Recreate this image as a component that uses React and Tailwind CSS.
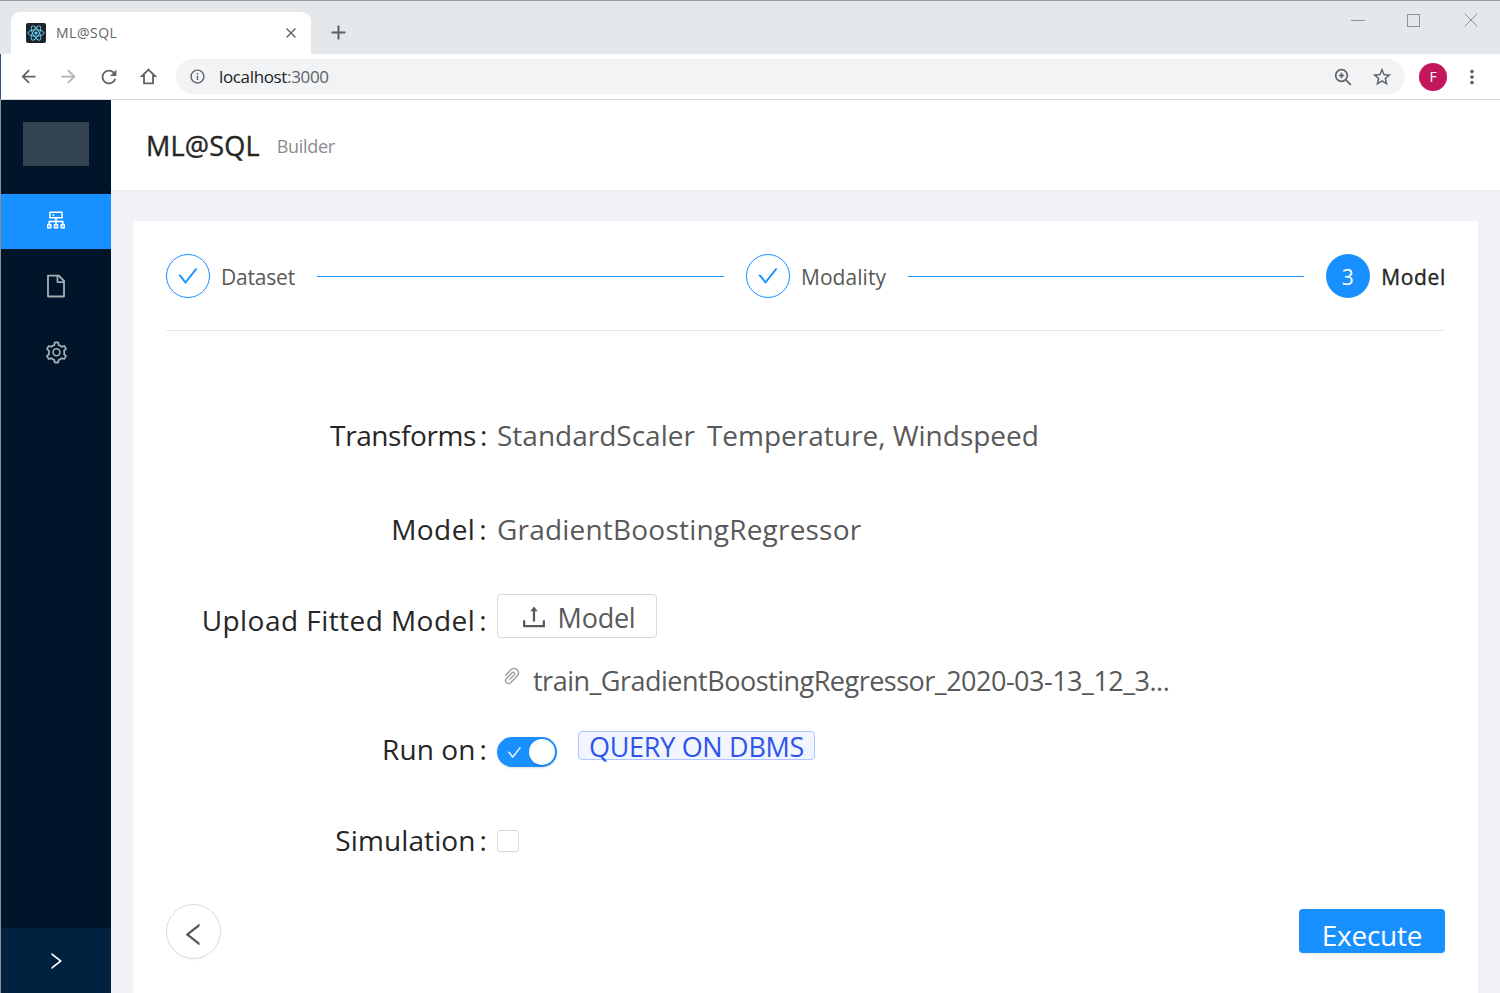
// App.jsx
import React from 'react';
import {
  AiOutlineCluster, AiOutlineFile, AiOutlineSetting, AiOutlineCheck, AiOutlineUpload,
  AiOutlinePaperClip, AiOutlineLeft, AiOutlineRight, AiOutlineClose, AiOutlinePlus,
} from 'react-icons/ai';
import { MdArrowBack, MdArrowForward, MdRefresh, MdInfoOutline, MdStarBorder, MdMoreVert } from 'react-icons/md';

function ReactLogo() {
  return (
    <svg width="20" height="20" viewBox="0 0 20 20" className="rounded-[2px] bg-[#20232a]">
      <circle cx="10" cy="10" r="1.6" fill="#61dafb" />
      <g fill="none" stroke="#61dafb" strokeWidth="0.9">
        <ellipse cx="10" cy="10" rx="8" ry="3.2" />
        <ellipse cx="10" cy="10" rx="8" ry="3.2" transform="rotate(60 10 10)" />
        <ellipse cx="10" cy="10" rx="8" ry="3.2" transform="rotate(120 10 10)" />
      </g>
    </svg>
  );
}

function HomeIcon() {
  return (
    <svg width="17" height="17" viewBox="0 0 17 17" fill="none" stroke="#5f6368" strokeWidth="1.8" strokeLinejoin="miter">
      <path d="M8.5 1.6 15 8h-2v7.4H4V8H2z" />
    </svg>
  );
}

function ZoomIcon() {
  return (
    <svg width="18" height="18" viewBox="0 0 18 18" fill="none" stroke="#5f6368" strokeWidth="1.7">
      <circle cx="7.5" cy="7.5" r="5.8" />
      <path d="M7.5 4.8v5.4M4.8 7.5h5.4M11.8 11.8l5 5" />
    </svg>
  );
}

function WindowClose() {
  return (
    <svg width="14" height="14" viewBox="0 0 14 14" stroke="#8f9193" strokeWidth="1" fill="none">
      <path d="M.5.5l13 13M13.5.5l-13 13" />
    </svg>
  );
}

function BrowserChrome() {
  return (
    <div className="shrink-0 border-t border-[#9a9c9e] font-['Open_Sans',sans-serif]">
      <div className="flex h-[53px] items-end bg-[#e5e8eb] pl-[11px]">
        <div className="flex h-[42px] w-[300px] items-center rounded-t-[9px] bg-white pl-[15px] pr-[13px]">
          <ReactLogo />
          <span className="ml-[10px] mb-[2px] text-[14px] tracking-[0.5px] text-[#5f6368]">ML@SQL</span>
          <AiOutlineClose className="ml-auto text-[#5f6368]" size={14} strokeWidth={30} />
        </div>
        <AiOutlinePlus className="mb-[12px] ml-[18px] text-[#5f6368]" size={19} strokeWidth={30} />
        <div className="mb-[27px] ml-auto flex items-center pr-[22px]">
          <div className="h-px w-[14px] bg-[#8f9193]" />
          <div className="ml-[42px] h-[13px] w-[13px] border border-[#8f9193]" />
          <div className="ml-[44px]"><WindowClose /></div>
        </div>
      </div>
      <div className="flex h-[46px] items-center border-b border-l border-b-[#d9dadc] border-l-[#2f4f86] bg-white pl-[17px] pr-[17px]">
        <MdArrowBack size={21} className="text-[#5f6368]" />
        <MdArrowForward size={21} className="ml-[19px] text-[#b1b3b6]" />
        <MdRefresh size={22} className="ml-[19px] text-[#5f6368]" />
        <div className="ml-[20px]"><HomeIcon /></div>
        <div className="ml-[19px] flex h-[35px] flex-1 items-center rounded-full bg-[#f1f3f4] pl-[13px] pr-[12px]">
          <MdInfoOutline size={17} className="text-[#5f6368]" />
          <span className="ml-[13px] text-[17px] tracking-[-0.35px] text-[#202124]">localhost<span className="text-[#5f6368]">:3000</span></span>
          <div className="ml-auto"><ZoomIcon /></div>
          <MdStarBorder size={22} className="ml-[19px] text-[#5f6368]" />
        </div>
        <div className="ml-[14px] flex h-[28px] w-[28px] items-center justify-center rounded-full bg-[#c2185b] text-[14px] text-white">F</div>
        <MdMoreVert size={22} className="ml-[14px] text-[#5f6368]" />
      </div>
    </div>
  );
}

function Sidebar() {
  return (
    <aside className="flex w-[111px] shrink-0 flex-col border-l border-[#8d8f91] bg-[#001529]">
      <div className="mx-[22px] mt-[22px] h-[44px] bg-[#344352]" />
      <div className="mt-[28px] flex h-[55px] items-center justify-center bg-[#1890ff] pb-[4px] text-white">
        <AiOutlineCluster size={24} />
      </div>
      <div className="mt-[4px] flex h-[66px] items-center justify-center text-[#a6adb4]">
        <AiOutlineFile size={26} />
      </div>
      <div className="flex h-[66px] items-center justify-center text-[#a6adb4]">
        <AiOutlineSetting size={25} />
      </div>
      <div className="mt-auto flex h-[65px] items-center justify-center bg-[#002140] text-white">
        <AiOutlineRight size={22} />
      </div>
    </aside>
  );
}

function DoneStep({ label, labelClassName = 'tracking-[-0.2px]' }) {
  return (
    <div className="flex items-center">
      <div className="flex h-[44px] w-[44px] items-center justify-center rounded-full border border-[#1890ff] text-[#1890ff]">
        <AiOutlineCheck size={24} />
      </div>
      <span className={`ml-[11px] pt-[2px] text-[21px] leading-[32px] text-[#595959] ${labelClassName}`}>{label}</span>
    </div>
  );
}

function Row({ label, className, labelClassName = 'tracking-[0.1px]', children }) {
  return (
    <div className={`flex ${className}`}>
      <div className={`w-[331px] shrink-0 text-right text-[28px] leading-[44px] text-[#262626] ${labelClassName}`}>
        {label}<span className="ml-[4px] mr-[10px]">:</span>
      </div>
      <div className="min-w-0 flex-1">{children}</div>
    </div>
  );
}

export default function App() {
  return (
    <div className="flex h-[993px] w-[1500px] flex-col overflow-hidden bg-white font-['Open_Sans',sans-serif]">
      <BrowserChrome />
      <div className="flex min-h-0 flex-1">
        <Sidebar />
        <main className="flex min-w-0 flex-1 flex-col bg-[#f0f2f5]">
          <header className="flex h-[91px] shrink-0 items-center border-b border-[#e8e8e8] bg-white pl-[35px] pt-[2px]">
            <h1 className="text-[27px] tracking-[0.2px] text-[#262626] [-webkit-text-stroke:0.4px_#262626]">ML@SQL</h1>
            <span className="ml-[17px] text-[18px] tracking-[-0.3px] text-[#8c8c8c]">Builder</span>
          </header>
          <div className="ml-[22px] mr-[22px] mt-[30px] flex-1 bg-white px-[33px] pt-[33px]">
            <div className="flex items-center border-b border-[#e8e8e8] pb-[32px]">
              <DoneStep label="Dataset" />
              <div className="mx-[22px] h-px w-[407px] bg-[#1890ff]" />
              <DoneStep label="Modality" labelClassName="tracking-[0.05px]" />
              <div className="mx-[22px] h-px flex-1 bg-[#1890ff]" />
              <div className="-mr-px flex items-center">
                <div className="flex h-[44px] w-[44px] items-center justify-center rounded-full bg-[#1890ff] pt-[3px] pr-[1px] text-[21px] text-white">3</div>
                <span className="ml-[11px] pt-[2px] text-[21px] leading-[32px] tracking-[0.65px] text-[#262626] [-webkit-text-stroke:0.35px_#262626]">Model</span>
              </div>
            </div>

            <Row label="Transforms" className="mt-[82px]" labelClassName="tracking-[-0.4px]">
              <div className="text-[28px] leading-[44px] text-[#595959]">StandardScaler<span className="ml-[12px]">Temperature, Windspeed</span></div>
            </Row>
            <Row label="Model" className="mt-[50px]" labelClassName="tracking-[0.4px]">
              <div className="text-[28px] leading-[44px] tracking-[0.2px] text-[#595959]">GradientBoostingRegressor</div>
            </Row>
            <Row label="Upload Fitted Model" className="mt-[43px]" labelClassName="pt-[4px] tracking-[0.45px]">
              <div className="flex h-[44px] w-[160px] items-center justify-center rounded-[4px] border border-[#d9d9d9] text-[#595959]">
                <AiOutlineUpload size={30} className="mt-[2px]" />
                <span className="ml-[9px] pt-[4px] text-[27px] tracking-[-0.25px]">Model</span>
              </div>
              <div className="mt-[21px] flex items-center text-[#595959]">
                <AiOutlinePaperClip size={22} className="mb-[10px] ml-[4px] text-[#a3a3a3]" />
                <span className="ml-[10px] text-[27px] leading-[44px] tracking-[-0.5px]">train_GradientBoostingRegressor_2020-03-13_12_3...</span>
              </div>
            </Row>
            <Row label="Run on" className="mt-[24px]">
              <div className="flex items-start">
                <div className="relative mt-[10px] h-[30px] w-[60px] rounded-full bg-[#1890ff] shadow-sm">
                  <AiOutlineCheck size={17} className="absolute left-[9px] top-[7px] text-white" />
                  <div className="absolute right-[2px] top-[2px] h-[26px] w-[26px] rounded-full bg-white shadow" />
                </div>
                <div className="ml-[21px] mt-[4px] flex h-[29px] items-center rounded-[4px] border border-[#adc6ff] bg-[#f0f5ff] px-[10px] pt-[3px] text-[27px] tracking-[-0.3px] text-[#2f54eb]">QUERY ON DBMS</div>
              </div>
            </Row>
            <Row label="Simulation" className="mt-[47px]">
              <div className="mt-[12px] h-[22px] w-[22px] rounded-[3px] border border-[#d9d9d9] bg-white" />
            </Row>

            <div className="mt-[42px] flex items-start justify-between">
              <div className="flex h-[55px] w-[55px] items-center justify-center rounded-full border border-[#d9d9d9] pt-[5px] text-[#595959] shadow-[0_2px_0_rgba(0,0,0,0.015)]">
                <AiOutlineLeft size={29} />
              </div>
              <div className="mt-[5px] flex h-[44px] w-[146px] items-center justify-center rounded-[4px] bg-[#1890ff] pt-[8px] text-[28px] tracking-[-0.25px] text-white shadow-[0_2px_0_rgba(0,0,0,0.045)]">Execute</div>
            </div>
          </div>
        </main>
      </div>
    </div>
  );
}
